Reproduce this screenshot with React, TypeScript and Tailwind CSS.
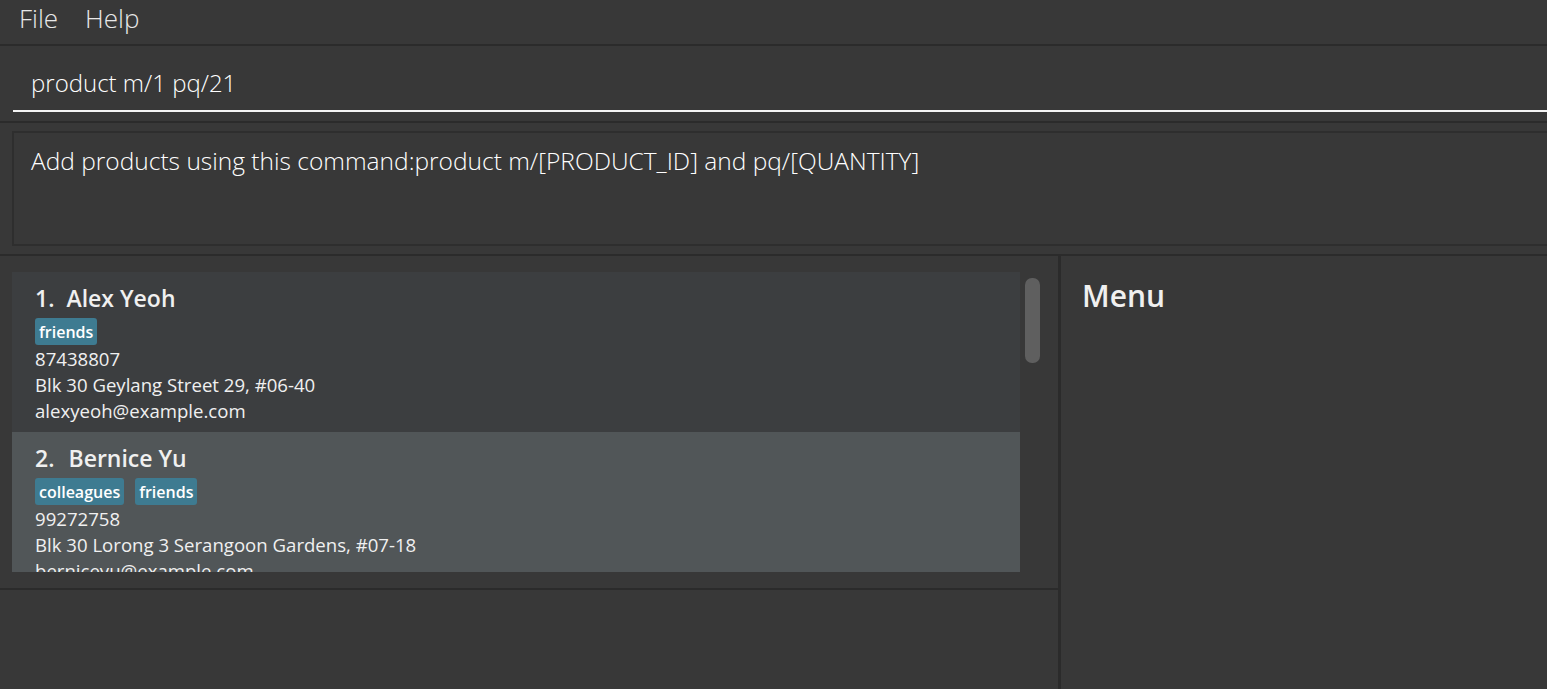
import React from "react";

type Person = {
  name: string;
  tags: string[];
  phone: string;
  address: string;
  email: string;
};

const people: Person[] = [
  {
    name: "Alex Yeoh",
    tags: ["friends"],
    phone: "87438807",
    address: "Blk 30 Geylang Street 29, #06-40",
    email: "alexyeoh@example.com",
  },
  {
    name: "Bernice Yu",
    tags: ["colleagues", "friends"],
    phone: "99272758",
    address: "Blk 30 Lorong 3 Serangoon Gardens, #07-18",
    email: "berniceyu@example.com",
  },
];

function Card({ p, i, selected }: { p: Person; i: number; selected: boolean }) {
  return (
    <div
      className={
        "h-[160px] shrink-0 pl-[23px] pt-[9px] flex flex-col " +
        (selected ? "bg-[#515658]" : "bg-[#3c3e40]")
      }
    >
      <div className="h-[35px] flex items-center text-[23px] font-semibold text-[#f0f0f0] leading-none">
        <span>{i}.</span>
        <span className={i === 1 ? "ml-[12px]" : "ml-[14px]"}>{p.name}</span>
      </div>
      <div className="flex gap-[11px] mt-[2px] h-[27px]">
        {p.tags.map((t) => (
          <span
            key={t}
            className="h-[27px] px-[4px] flex items-center rounded-[3px] bg-[#3e7b91] text-white text-[16px] font-semibold leading-none"
          >
            {t}
          </span>
        ))}
      </div>
      <div className="text-[18.6px] text-[#f0f0f0] leading-[26px] mt-[1px]">{p.phone}</div>
      <div className="text-[18.6px] text-[#f0f0f0] leading-[26px]">{p.address}</div>
      <div className="text-[18.6px] text-[#f0f0f0] leading-[26px]">{p.email}</div>
    </div>
  );
}

export default function App() {
  return (
    <div
      className="w-[1547px] h-[689px] bg-[#383838] flex flex-col overflow-hidden"
      style={{ fontFamily: '"Open Sans", "Noto Sans", sans-serif' }}
    >
      {/* Menu bar */}
      <div className="h-[44px] shrink-0 flex items-center pl-[19px] pb-[7px] gap-[27px] text-[26px] font-light text-[#e8e8e8]">
        <span>File</span>
        <span>Help</span>
      </div>
      <div className="h-[2px] shrink-0 bg-[#2b2b2b]" />

      {/* Command box */}
      <div className="h-[75px] shrink-0 pl-[13px] flex flex-col">
        <div className="h-[66px] flex items-center border-b-2 border-[#f4f4f4] pl-[18px] pt-[10px] text-[24px] font-light text-white">
          product m/1 pq/21
        </div>
      </div>
      <div className="h-[2px] shrink-0 bg-[#2b2b2b]" />

      {/* Result display */}
      <div className="h-[131px] shrink-0 pl-[12px] pt-[8px]">
        <div className="h-[115px] border-2 border-r-0 border-[#2e2e2e] pl-[17px] pt-[10px] text-[24.5px] font-light text-white">
          Add products using this command:product m/[PRODUCT_ID] and pq/[QUANTITY]
        </div>
      </div>
      <div className="h-[2px] shrink-0 bg-[#2b2b2b]" />

      {/* Main */}
      <div className="flex-1 flex min-h-0">
        <div className="w-[1058px] shrink-0 flex flex-col">
          <div className="h-[332px] shrink-0 pl-[12px] pt-[16px] pr-[6px] flex">
            <div className="w-[1008px] h-[300px] overflow-hidden flex flex-col">
              {people.map((p, idx) => (
                <Card key={p.name} p={p} i={idx + 1} selected={idx === 1} />
              ))}
            </div>
            <div className="ml-[5px] pt-[6px]">
              <div className="w-[15px] h-[85px] rounded-[7px] bg-[#5f5f5f]" />
            </div>
          </div>
          <div className="h-[2px] shrink-0 bg-[#2b2b2b]" />
          <div className="flex-1" />
        </div>
        <div className="w-[3px] shrink-0 bg-[#2b2b2b]" />
        <div className="flex-1 pl-[21px] pt-[25px]">
          <div className="text-[30px] font-semibold text-[#f0f0f0] leading-none">Menu</div>
        </div>
      </div>
    </div>
  );
}
